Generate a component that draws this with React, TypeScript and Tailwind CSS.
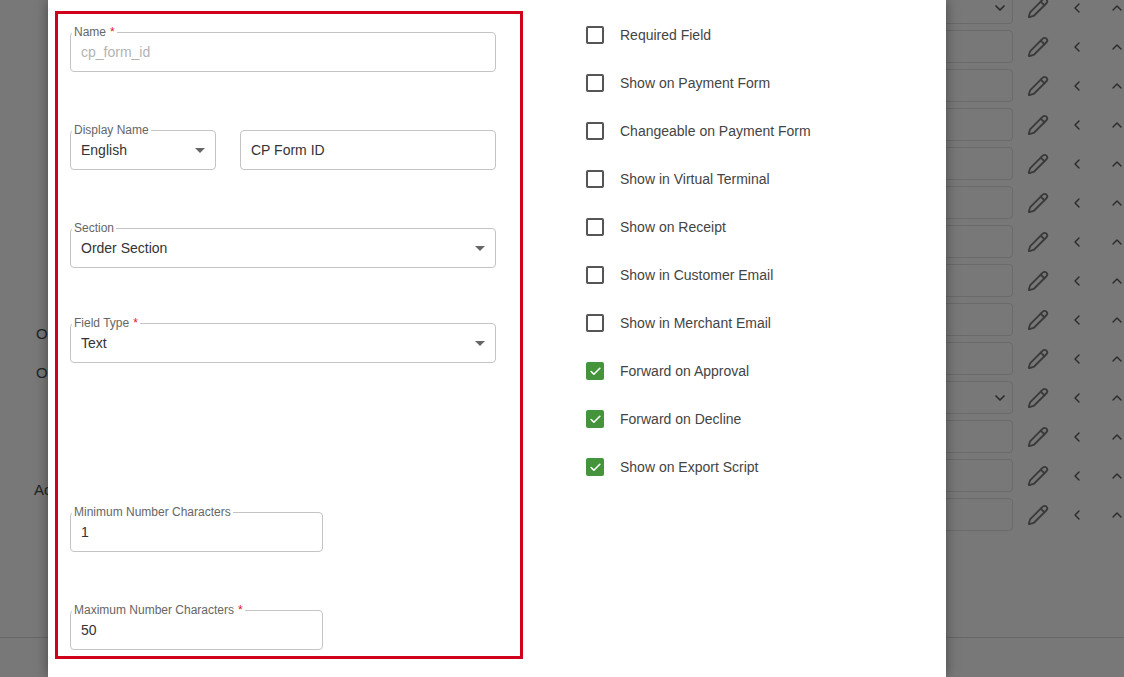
import React from 'react';
import { Pencil, ChevronLeft, ChevronUp, ChevronDown, Check } from 'lucide-react';

const font = { fontFamily: '"Liberation Sans", Arial, sans-serif' };

const rows = Array.from({ length: 14 }, (_, i) => i);

const Field: React.FC<{ label?: string; required?: boolean; value: string; muted?: boolean; select?: boolean; className?: string }> = ({
  label,
  required,
  value,
  muted,
  select,
  className
}) => (
  <div className={`relative h-10 rounded border border-[#c4c4c4] flex items-center px-[10px] ${className ?? ''}`}>
    {label && (
      <span className="absolute -top-[8px] left-[1px] bg-white px-[2px] text-[12px] leading-[14px] text-[#666]">
        {label}
        {required && <span className="text-[#e3171b] ml-1">*</span>}
      </span>
    )}
    <span className={`flex-1 text-[14px] ${muted ? 'text-[#b3b3b3]' : 'text-[#333]'}`}>{value}</span>
    {select && <span className="w-0 h-0 border-l-[5px] border-r-[5px] border-t-[5px] border-l-transparent border-r-transparent border-t-[#666]" />}
  </div>
);

const checks: [string, boolean][] = [
  ['Required Field', false],
  ['Show on Payment Form', false],
  ['Changeable on Payment Form', false],
  ['Show in Virtual Terminal', false],
  ['Show on Receipt', false],
  ['Show in Customer Email', false],
  ['Show in Merchant Email', false],
  ['Forward on Approval', true],
  ['Forward on Decline', true],
  ['Show on Export Script', true]
];

export default function App() {
  return (
    <div className="relative w-[1124px] h-[677px] overflow-hidden bg-[#787878]" style={font}>
      {/* page behind the overlay */}
      <div className="absolute left-[930px] top-[-9px] flex flex-col gap-[6px]">
        {rows.map(i => (
          <div key={i} className="flex items-center h-[33px]">
            <div className="w-[83px] h-[33px] rounded border border-[#6a6a6a] flex items-center justify-end pr-[4px]">
              {(i === 0 || i === 10) && <ChevronDown className="w-4 h-4 text-[#2a2a2a]" strokeWidth={2.5} />}
            </div>
            <Pencil className="ml-[14px] w-[22px] h-[22px] text-[#3a3a3a]" strokeWidth={2} />
            <ChevronLeft className="ml-[20px] w-4 h-4 text-[#2a2a2a]" strokeWidth={2} />
            <ChevronUp className="ml-[24px] w-4 h-4 text-[#2a2a2a]" strokeWidth={2} />
          </div>
        ))}
      </div>
      <span className="absolute left-[36px] top-[323px] text-[15px] text-[#222]">Or</span>
      <span className="absolute left-[36px] top-[362px] text-[15px] text-[#222]">Or</span>
      <span className="absolute left-[34px] top-[479px] text-[15px] text-[#222]">Ac</span>
      <div className="absolute left-0 right-0 top-[637px] border-t border-[#666]" />

      {/* modal */}
      <div className="absolute left-[48px] top-0 w-[898px] h-[677px] bg-white shadow-[0_0_12px_rgba(0,0,0,0.4)] flex">
        <div className="ml-[7px] mt-[11px] w-[468px] h-[648px] border-[3px] border-[#d0021b] pl-[12px] pr-[24px] pt-[18px] flex flex-col">
          <Field label="Name" required value="cp_form_id" muted />
          <div className="flex mt-[58px] gap-[24px]">
            <Field label="Display Name" value="English" select className="w-[146px]" />
            <Field value="CP Form ID" className="flex-1" />
          </div>
          <Field label="Section" value="Order Section" select className="mt-[58px]" />
          <Field label="Field Type" required value="Text" select className="mt-[55px]" />
          <Field label="Minimum Number Characters" value="1" className="mt-[149px] w-[253px]" />
          <Field label="Maximum Number Characters" required value="50" className="mt-[58px] w-[253px]" />
        </div>
        <div className="ml-[63px] mt-[26px] flex flex-col gap-[30px]">
          {checks.map(([label, on]) => (
            <div key={label} className="flex items-center h-[18px]">
              {on ? (
                <span className="w-[18px] h-[18px] rounded-[2px] bg-[#43943b] flex items-center justify-center">
                  <Check className="w-[13px] h-[13px] text-white" strokeWidth={3} />
                </span>
              ) : (
                <span className="w-[18px] h-[18px] rounded-[2px] border-2 border-[#555]" />
              )}
              <span className="ml-[16px] text-[14px] text-[#444]">{label}</span>
            </div>
          ))}
        </div>
      </div>
    </div>
  );
}
